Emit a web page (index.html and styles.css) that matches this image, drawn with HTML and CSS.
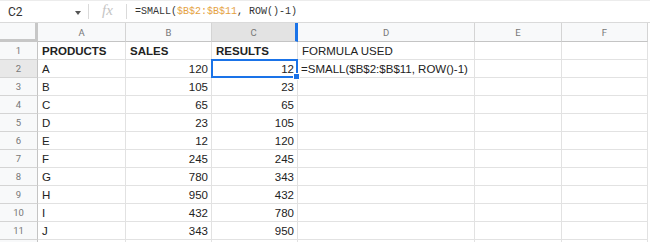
FILE: index.html
```html
<!DOCTYPE html>
<html lang="en">
<head>
    <meta charset="UTF-8">
    <title>SMALL formula sheet</title>
    <link rel="stylesheet" href="styles.css">
</head>
<body>
    <div class="formula-bar">
        <div class="name-box">C2</div>
        <div class="caret"></div>
        <div class="sep"></div>
        <div class="fx">fx</div>
        <div class="sep"></div>
        <div class="formula">=SMALL(<span class="ref">$B$2:$B$11</span>, ROW()-1)</div>
    </div>

    <div class="sheet">
        <div class="corner"></div>
        <div class="col-head">A</div>
        <div class="col-head">B</div>
        <div class="col-head active">C</div>
        <div class="col-head">D</div>
        <div class="col-head">E</div>
        <div class="col-head">F</div>

        <div class="row-head">1</div>
        <div class="cell bold">PRODUCTS</div>
        <div class="cell bold">SALES</div>
        <div class="cell bold">RESULTS</div>
        <div class="cell">FORMULA USED</div>
        <div class="cell"></div>
        <div class="cell"></div>

        <div class="row-head active">2</div>
        <div class="cell">A</div>
        <div class="cell num">120</div>
        <div class="cell num selected">12</div>
        <div class="cell overflow">=SMALL($B$2:$B$11, ROW()-1)</div>
        <div class="cell"></div>
        <div class="cell"></div>

        <div class="row-head">3</div>
        <div class="cell">B</div>
        <div class="cell num">105</div>
        <div class="cell num">23</div>
        <div class="cell"></div>
        <div class="cell"></div>
        <div class="cell"></div>

        <div class="row-head">4</div>
        <div class="cell">C</div>
        <div class="cell num">65</div>
        <div class="cell num">65</div>
        <div class="cell"></div>
        <div class="cell"></div>
        <div class="cell"></div>

        <div class="row-head">5</div>
        <div class="cell">D</div>
        <div class="cell num">23</div>
        <div class="cell num">105</div>
        <div class="cell"></div>
        <div class="cell"></div>
        <div class="cell"></div>

        <div class="row-head">6</div>
        <div class="cell">E</div>
        <div class="cell num">12</div>
        <div class="cell num">120</div>
        <div class="cell"></div>
        <div class="cell"></div>
        <div class="cell"></div>

        <div class="row-head">7</div>
        <div class="cell">F</div>
        <div class="cell num">245</div>
        <div class="cell num">245</div>
        <div class="cell"></div>
        <div class="cell"></div>
        <div class="cell"></div>

        <div class="row-head">8</div>
        <div class="cell">G</div>
        <div class="cell num">780</div>
        <div class="cell num">343</div>
        <div class="cell"></div>
        <div class="cell"></div>
        <div class="cell"></div>

        <div class="row-head">9</div>
        <div class="cell">H</div>
        <div class="cell num">950</div>
        <div class="cell num">432</div>
        <div class="cell"></div>
        <div class="cell"></div>
        <div class="cell"></div>

        <div class="row-head">10</div>
        <div class="cell">I</div>
        <div class="cell num">432</div>
        <div class="cell num">780</div>
        <div class="cell"></div>
        <div class="cell"></div>
        <div class="cell"></div>

        <div class="row-head">11</div>
        <div class="cell">J</div>
        <div class="cell num">343</div>
        <div class="cell num">950</div>
        <div class="cell"></div>
        <div class="cell"></div>
        <div class="cell"></div>

        <!-- row 12 is only partly in view -->
        <div class="row-head"></div>
        <div class="cell"></div>
        <div class="cell"></div>
        <div class="cell"></div>
        <div class="cell"></div>
        <div class="cell"></div>
        <div class="cell"></div>
    </div>
</body>
</html>
```

FILE: styles.css
```css
body {
    margin: 0;
    background-color: #fff;
    font-family: 'Liberation Sans', Arial, sans-serif;
    color: #222;
    overflow: hidden;
}

/* formula bar */
.formula-bar {
    display: flex;
    align-items: center;
    height: 21px;
    border-top: 1px solid #ececec;
    border-bottom: 1px solid #dadada;
    box-sizing: content-box;
}
.name-box {
    width: 66px;
    padding-left: 8px;
    font-family: Roboto, 'Liberation Sans', sans-serif;
    font-size: 12px;
    color: #333;
}
.caret {
    width: 0;
    height: 0;
    border-left: 3.5px solid transparent;
    border-right: 3.5px solid transparent;
    border-top: 4px solid #555;
    margin-left: 1px;
    margin-right: 7px;
    margin-top: 2px;
}
.sep {
    width: 1px;
    height: 15px;
    background-color: #dadada;
}
.fx {
    width: 37px;
    text-align: center;
    font-family: 'Liberation Serif', serif;
    font-style: italic;
    font-size: 15px;
    color: #c4c4c4;
    padding-bottom: 2px;
}
.formula {
    padding-left: 8px;
    font-family: 'Liberation Mono', 'DejaVu Sans Mono', monospace;
    font-size: 10px;
    color: #333;
}
.ref {
    color: #e5a23f;
}

/* grid */
.sheet {
    display: grid;
    grid-template-columns: 38px 88px 86px 86px 177px 87px 86px;
    grid-template-rows: 19px;
    grid-auto-rows: 18px;
    width: 648px;
    font-size: 11.5px;
}
.corner {
    background-color: #f8f9fa;
    border-right: 3px solid #c7c7c7;
    border-bottom: 3px solid #c7c7c7;
    box-sizing: border-box;
}
.col-head, .row-head {
    display: flex;
    align-items: center;
    justify-content: center;
    background-color: #f8f9fa;
    color: #777;
    font-family: Roboto, 'Liberation Sans', sans-serif;
    font-size: 9.5px;
    box-sizing: border-box;
}
.col-head {
    border-right: 1px solid #d4d4d4;
    border-bottom: 1px solid #c4c4c4;
    padding-top: 1px;
}
.row-head {
    border-right: 1px solid #c4c4c4;
    border-bottom: 1px solid #d4d4d4;
}
.col-head.active {
    background-color: #e3e3e3;
    border-right: 3px solid #1a73e8;
}
.row-head.active {
    background-color: #e8e8e8;
}
.cell {
    display: flex;
    align-items: center;
    padding: 0 3px 0 4px;
    border-right: 1px solid #e2e2e2;
    border-bottom: 1px solid #e2e2e2;
    box-sizing: border-box;
    white-space: nowrap;
    min-width: 0;
}
.cell.bold {
    font-weight: bold;
}
.cell.num {
    justify-content: flex-end;
}
.cell.overflow {
    padding-left: 3px;
}
.cell.selected {
    position: relative;
}
.cell.selected::after {
    content: "";
    position: absolute;
    left: -1px;
    top: -1px;
    right: -1px;
    bottom: -1px;
    border: 2px solid #1a73e8;
}
.cell.selected::before {
    content: "";
    position: absolute;
    right: -3px;
    bottom: -3px;
    width: 5px;
    height: 5px;
    background-color: #1a73e8;
    border: 1px solid #fff;
    z-index: 2;
    box-sizing: content-box;
}
```
